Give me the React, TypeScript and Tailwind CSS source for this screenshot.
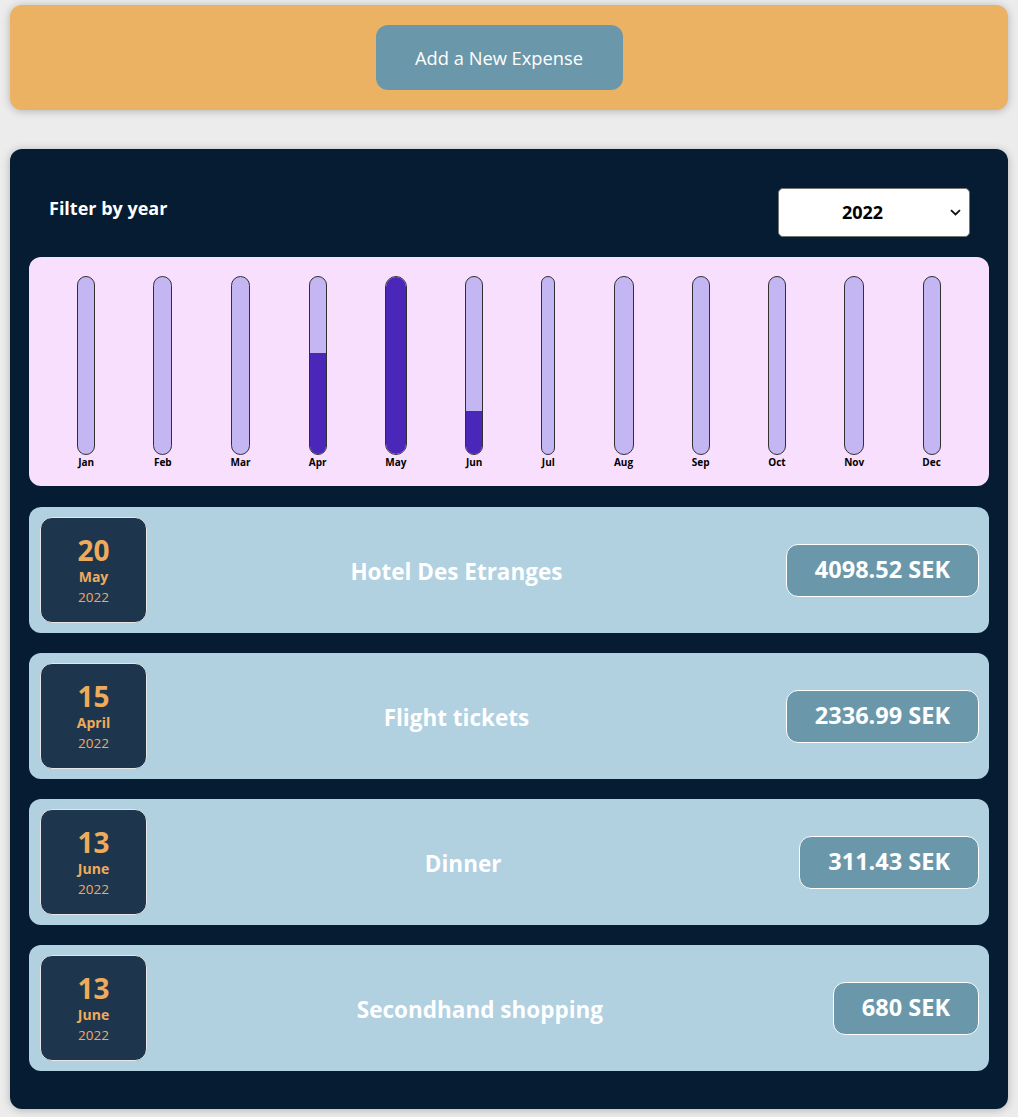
import React from "react";

type Expense = { id: string; title: string; amount: number; date: Date };

const expenses: Expense[] = [
  { id: "e1", title: "Hotel Des Etranges", amount: 4098.52, date: new Date(2022, 4, 20) },
  { id: "e2", title: "Flight tickets", amount: 2336.99, date: new Date(2022, 3, 15) },
  { id: "e3", title: "Dinner", amount: 311.43, date: new Date(2022, 5, 13) },
  { id: "e4", title: "Secondhand shopping", amount: 680, date: new Date(2022, 5, 13) },
];

const months = ["Jan", "Feb", "Mar", "Apr", "May", "Jun", "Jul", "Aug", "Sep", "Oct", "Nov", "Dec"];
const barWidths = [18, 19, 19, 18, 22, 18, 14, 20, 18, 18, 20, 18];

const font = { fontFamily: '"Open Sans", "Noto Sans", sans-serif' };

function ChartBar({ label, pct, w }: { label: string; pct: number; w: number }) {
  return (
    <div className="flex h-full flex-col items-center">
      <div
        className="flex flex-1 flex-col justify-end overflow-hidden rounded-[12px] border border-[#313131] bg-[#c3b6f2]"
        style={{ width: w }}
      >
        <div className="w-full bg-[#4a27b9]" style={{ height: `${pct}%` }} />
      </div>
      <div className="mt-[1px] text-[10px] font-bold leading-[12px] text-black">{label}</div>
    </div>
  );
}

function Chart() {
  const totals = months.map((_, i) =>
    expenses.filter((e) => e.date.getMonth() === i).reduce((s, e) => s + e.amount, 0)
  );
  const max = Math.max(...totals);
  return (
    <div className="flex h-[229px] justify-around rounded-[12px] bg-[#f7dffd] px-[19px] pt-[19px] pb-[18px]">
      {months.map((m, i) => (
        <ChartBar key={m} label={m} pct={max ? (totals[i] / max) * 100 : 0} w={barWidths[i]} />
      ))}
    </div>
  );
}

const monthLong = ["January", "February", "March", "April", "May", "June", "July", "August", "September", "October", "November", "December"];

function ExpenseItem({ e }: { e: Expense }) {
  return (
    <div className="flex h-[126px] items-center rounded-[12px] bg-[#b1d0e0] p-[10px] pl-[11px]">
      <div className="flex h-[106px] w-[107px] flex-col items-center justify-center rounded-[12px] border border-[#e6e6e6] bg-[#1e364d] text-[#efab5c]">
        <div className="mt-[2px] text-[28px] font-bold leading-[30px]">{e.date.getDate()}</div>
        <div className="mt-[2px] text-[14px] font-bold leading-[20px]">{monthLong[e.date.getMonth()]}</div>
        <div className="text-[13.5px] leading-[20px]">{e.date.getFullYear()}</div>
      </div>
      <div className="mt-[3px] flex-1 pr-[20px] text-center text-[22.5px] font-bold text-white">{e.title}</div>
      <div className="flex h-[53px] items-center rounded-[12px] border border-white bg-[#6a98aa] px-[28px] text-[23.5px] font-bold text-white">
        {e.amount} SEK
      </div>
    </div>
  );
}

export default function App() {
  return (
    <div className="min-h-[1117px] bg-[#ececec] pt-[5px] pb-[8px]" style={font}>
      <div className="ml-[10px] flex w-[998px] justify-center rounded-[12px] bg-[#ecb264] py-[20px] shadow-[0_1px_8px_rgba(0,0,0,0.25)]">
        <button className="mr-[20px] h-[65px] w-[247px] rounded-[12px] bg-[#6a98aa] text-[18.3px] text-white">
          Add a New Expense
        </button>
      </div>

      <div className="ml-[10px] mt-[39px] w-[998px] rounded-[12px] bg-[#051c33] px-[19px] pt-[39px] pb-[38px] shadow-[0_1px_8px_rgba(0,0,0,0.25)]">
        <div className="mb-[20px] flex items-center justify-between pl-[20px] pr-[19px]">
          <div className="mt-[-8px] text-[18px] font-bold text-white">Filter by year</div>
          <div className="relative">
            <select
              defaultValue="2022"
              className="h-[49px] w-[192px] appearance-none rounded-[5px] border border-[#767676] bg-white pr-[23px] text-center text-[18px] font-bold text-black [text-align-last:center]"
              style={font}
            >
              <option value="2022">2022</option>
              <option value="2021">2021</option>
              <option value="2020">2020</option>
              <option value="2019">2019</option>
            </select>
            <svg
              className="pointer-events-none absolute right-[9px] top-[21px]"
              width="11"
              height="7"
              viewBox="0 0 11 7"
              fill="none"
            >
              <path d="M1 1.2 L5.5 5.5 L10 1.2" stroke="#111" strokeWidth="1.8" />
            </svg>
          </div>
        </div>

        <Chart />

        <div className="mt-[21px] flex flex-col gap-[20px]">
          {expenses.map((e) => (
            <ExpenseItem key={e.id} e={e} />
          ))}
        </div>
      </div>
    </div>
  );
}
